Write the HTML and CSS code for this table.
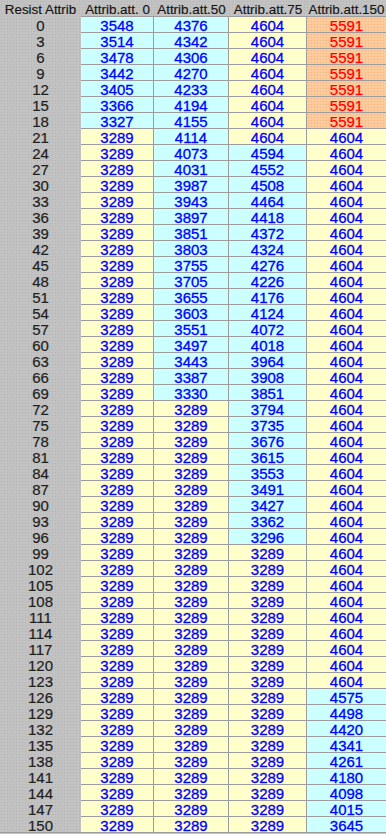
FILE: index.html
```html
<!DOCTYPE html>
<html>
<head>
<meta charset="utf-8">
<title>Resist Attrib</title>
<link rel="stylesheet" href="styles.css">
</head>
<body>
<div class="sheet">
<div class="hd">Resist Attrib</div><div class="hd">Attrib.att. 0</div><div class="hd">Attrib.att.50</div><div class="hd">Attrib.att.75</div><div class="hd">Attrib.att.150</div>
<div class="rh">0</div><div class="c">3548</div><div class="c">4376</div><div class="y">4604</div><div class="o last">5591</div>
<div class="rh">3</div><div class="c">3514</div><div class="c">4342</div><div class="y">4604</div><div class="o last">5591</div>
<div class="rh">6</div><div class="c">3478</div><div class="c">4306</div><div class="y">4604</div><div class="o last">5591</div>
<div class="rh">9</div><div class="c">3442</div><div class="c">4270</div><div class="y">4604</div><div class="o last">5591</div>
<div class="rh">12</div><div class="c">3405</div><div class="c">4233</div><div class="y">4604</div><div class="o last">5591</div>
<div class="rh">15</div><div class="c">3366</div><div class="c">4194</div><div class="y">4604</div><div class="o last">5591</div>
<div class="rh">18</div><div class="c">3327</div><div class="c">4155</div><div class="y">4604</div><div class="o last">5591</div>
<div class="rh">21</div><div class="y">3289</div><div class="c">4114</div><div class="y">4604</div><div class="y last">4604</div>
<div class="rh">24</div><div class="y">3289</div><div class="c">4073</div><div class="c">4594</div><div class="y last">4604</div>
<div class="rh">27</div><div class="y">3289</div><div class="c">4031</div><div class="c">4552</div><div class="y last">4604</div>
<div class="rh">30</div><div class="y">3289</div><div class="c">3987</div><div class="c">4508</div><div class="y last">4604</div>
<div class="rh">33</div><div class="y">3289</div><div class="c">3943</div><div class="c">4464</div><div class="y last">4604</div>
<div class="rh">36</div><div class="y">3289</div><div class="c">3897</div><div class="c">4418</div><div class="y last">4604</div>
<div class="rh">39</div><div class="y">3289</div><div class="c">3851</div><div class="c">4372</div><div class="y last">4604</div>
<div class="rh">42</div><div class="y">3289</div><div class="c">3803</div><div class="c">4324</div><div class="y last">4604</div>
<div class="rh">45</div><div class="y">3289</div><div class="c">3755</div><div class="c">4276</div><div class="y last">4604</div>
<div class="rh">48</div><div class="y">3289</div><div class="c">3705</div><div class="c">4226</div><div class="y last">4604</div>
<div class="rh">51</div><div class="y">3289</div><div class="c">3655</div><div class="c">4176</div><div class="y last">4604</div>
<div class="rh">54</div><div class="y">3289</div><div class="c">3603</div><div class="c">4124</div><div class="y last">4604</div>
<div class="rh">57</div><div class="y">3289</div><div class="c">3551</div><div class="c">4072</div><div class="y last">4604</div>
<div class="rh">60</div><div class="y">3289</div><div class="c">3497</div><div class="c">4018</div><div class="y last">4604</div>
<div class="rh">63</div><div class="y">3289</div><div class="c">3443</div><div class="c">3964</div><div class="y last">4604</div>
<div class="rh">66</div><div class="y">3289</div><div class="c">3387</div><div class="c">3908</div><div class="y last">4604</div>
<div class="rh">69</div><div class="y">3289</div><div class="c">3330</div><div class="c">3851</div><div class="y last">4604</div>
<div class="rh">72</div><div class="y">3289</div><div class="y">3289</div><div class="c">3794</div><div class="y last">4604</div>
<div class="rh">75</div><div class="y">3289</div><div class="y">3289</div><div class="c">3735</div><div class="y last">4604</div>
<div class="rh">78</div><div class="y">3289</div><div class="y">3289</div><div class="c">3676</div><div class="y last">4604</div>
<div class="rh">81</div><div class="y">3289</div><div class="y">3289</div><div class="c">3615</div><div class="y last">4604</div>
<div class="rh">84</div><div class="y">3289</div><div class="y">3289</div><div class="c">3553</div><div class="y last">4604</div>
<div class="rh">87</div><div class="y">3289</div><div class="y">3289</div><div class="c">3491</div><div class="y last">4604</div>
<div class="rh">90</div><div class="y">3289</div><div class="y">3289</div><div class="c">3427</div><div class="y last">4604</div>
<div class="rh">93</div><div class="y">3289</div><div class="y">3289</div><div class="c">3362</div><div class="y last">4604</div>
<div class="rh">96</div><div class="y">3289</div><div class="y">3289</div><div class="c">3296</div><div class="y last">4604</div>
<div class="rh">99</div><div class="y">3289</div><div class="y">3289</div><div class="y">3289</div><div class="y last">4604</div>
<div class="rh">102</div><div class="y">3289</div><div class="y">3289</div><div class="y">3289</div><div class="y last">4604</div>
<div class="rh">105</div><div class="y">3289</div><div class="y">3289</div><div class="y">3289</div><div class="y last">4604</div>
<div class="rh">108</div><div class="y">3289</div><div class="y">3289</div><div class="y">3289</div><div class="y last">4604</div>
<div class="rh">111</div><div class="y">3289</div><div class="y">3289</div><div class="y">3289</div><div class="y last">4604</div>
<div class="rh">114</div><div class="y">3289</div><div class="y">3289</div><div class="y">3289</div><div class="y last">4604</div>
<div class="rh">117</div><div class="y">3289</div><div class="y">3289</div><div class="y">3289</div><div class="y last">4604</div>
<div class="rh">120</div><div class="y">3289</div><div class="y">3289</div><div class="y">3289</div><div class="y last">4604</div>
<div class="rh">123</div><div class="y">3289</div><div class="y">3289</div><div class="y">3289</div><div class="y last">4604</div>
<div class="rh">126</div><div class="y">3289</div><div class="y">3289</div><div class="y">3289</div><div class="c last">4575</div>
<div class="rh">129</div><div class="y">3289</div><div class="y">3289</div><div class="y">3289</div><div class="c last">4498</div>
<div class="rh">132</div><div class="y">3289</div><div class="y">3289</div><div class="y">3289</div><div class="c last">4420</div>
<div class="rh">135</div><div class="y">3289</div><div class="y">3289</div><div class="y">3289</div><div class="c last">4341</div>
<div class="rh">138</div><div class="y">3289</div><div class="y">3289</div><div class="y">3289</div><div class="c last">4261</div>
<div class="rh">141</div><div class="y">3289</div><div class="y">3289</div><div class="y">3289</div><div class="c last">4180</div>
<div class="rh">144</div><div class="y">3289</div><div class="y">3289</div><div class="y">3289</div><div class="c last">4098</div>
<div class="rh">147</div><div class="y">3289</div><div class="y">3289</div><div class="y">3289</div><div class="c last">4015</div>
<div class="rh">150</div><div class="y">3289</div><div class="y">3289</div><div class="y">3289</div><div class="c last">3645</div>
</div>
</body>
</html>
```

FILE: styles.css
```css
html, body {
  margin: 0;
  padding: 0;
}
body {
  background-color: #c2c2c2;
  background-image: radial-gradient(circle, rgba(0,0,0,0.08) 0.7px, transparent 0.9px);
  background-size: 3px 3px;
  width: 386px;
  height: 834px;
  overflow: hidden;
}
.sheet {
  display: grid;
  grid-template-columns: 81px 73px 75px 78px 79px;
  grid-auto-rows: 16px;
  border-bottom: 1px solid #9c9c9c;
}
.sheet > div {
  box-sizing: border-box;
  text-align: center;
  white-space: nowrap;
}
.hd {
  font-family: "Liberation Sans", Arial, sans-serif;
  font-size: 13.4px;
  line-height: 13px;
  padding-top: 3px;
  color: #141414;
  -webkit-text-stroke: 0.15px #141414;
}
.rh {
  font-family: "Liberation Sans Narrow", "Arial Narrow", "Liberation Sans", sans-serif;
  font-size: 15px;
  line-height: 12px;
  padding-top: 4px;
  color: #1e1e1e;
  -webkit-text-stroke: 0.2px #1e1e1e;
}
.c, .y, .o {
  font-family: "Liberation Sans Narrow", "Arial Narrow", "Liberation Sans", sans-serif;
  font-size: 15px;
  line-height: 12px;
  padding-top: 3px;
  color: #0000ff;
  -webkit-text-stroke: 0.3px #0000ff;
  border-top: 1px solid #9c9c9c;
  border-right: 1px solid #9c9c9c;
}
.c { background: #ccffff; }
.y { background: #ffffcc; }
.o {
  color: #ff0000;
  -webkit-text-stroke: 0.25px #ff0000;
  background-color: #fdca9c;
  background-image: radial-gradient(circle, rgba(200,90,0,0.18) 0.6px, transparent 0.9px);
  background-size: 3px 3px;
}
.last { border-right: none; }
```
